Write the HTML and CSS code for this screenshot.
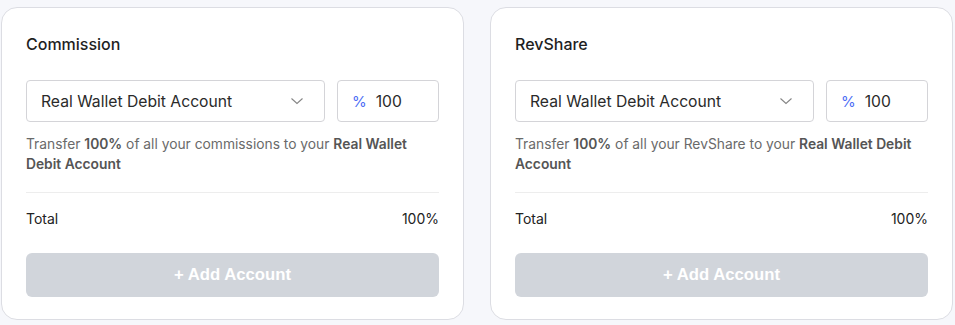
FILE: index.html
```html
<!DOCTYPE html>
<html>
<head>
<meta charset="utf-8">
<link rel="stylesheet" href="styles.css">
</head>
<body>
<div class="page">
  <section class="card">
    <h2 class="title">Commission</h2>
    <div class="fields">
      <div class="select">
        <span>Real Wallet Debit Account</span>
        <svg class="chev" width="14" height="8" viewBox="0 0 14 8"><path d="M1.5 1.5l5.5 5 5.5-5" fill="none" stroke="#858585" stroke-width="1.1"/></svg>
      </div>
      <div class="pct"><span class="sym">%</span><span class="val">100</span></div>
    </div>
    <p class="desc">Transfer <b>100%</b> of all your commissions to your <b>Real Wallet Debit Account</b></p>
    <div class="total"><span>Total</span><span>100%</span></div>
    <button class="add">+ Add Account</button>
  </section>
  <section class="card">
    <h2 class="title">RevShare</h2>
    <div class="fields">
      <div class="select">
        <span>Real Wallet Debit Account</span>
        <svg class="chev" width="14" height="8" viewBox="0 0 14 8"><path d="M1.5 1.5l5.5 5 5.5-5" fill="none" stroke="#858585" stroke-width="1.1"/></svg>
      </div>
      <div class="pct"><span class="sym">%</span><span class="val">100</span></div>
    </div>
    <p class="desc">Transfer <b>100%</b> of all your RevShare to your <b>Real Wallet Debit Account</b></p>
    <div class="total"><span>Total</span><span>100%</span></div>
    <button class="add">+ Add Account</button>
  </section>
</div>
</body>
</html>
```
FILE: styles.css
```css
* { box-sizing: border-box; }
body {
  margin: 0;
  background: #f6f7fb;
  font-family: Inter, "Noto Sans", sans-serif;
  color: #222;
}
.page {
  display: grid;
  grid-template-columns: 463px 463px;
  gap: 26px;
  padding: 7px 0 0 1px;
}
.card {
  background: #fff;
  border: 1px solid #dcdde3;
  border-radius: 16px;
  padding: 26px 24px 23px;
  height: 313px;
}
.title {
  margin: 0;
  font-size: 16px;
  font-weight: 500;
  line-height: 20px;
  color: #1f1f1f;
}
.fields {
  display: flex;
  gap: 12px;
  margin-top: 26px;
}
.select {
  width: 299px;
  height: 42px;
  border: 1px solid #d4d4d8;
  border-radius: 4px;
  display: flex;
  align-items: center;
  justify-content: space-between;
  padding: 0 20px 0 14px;
  font-size: 15.7px;
  color: #2a2a2a;
}
.pct {
  flex: 1;
  height: 42px;
  border: 1px solid #d4d4d8;
  border-radius: 4px;
  display: flex;
  align-items: center;
  padding-left: 14px;
  font-size: 15.7px;
}
.sym { color: #4d6ef5; font-size: 15px; margin-right: 9px; }
.val { color: #2a2a2a; }
.desc {
  margin: 12px 0 0;
  font-size: 13.8px;
  line-height: 20px;
  color: #6a6a6a;
  padding-bottom: 18px;
  border-bottom: 1px solid #ededed;
}
.desc b { font-weight: 600; color: #555; }
.total {
  display: flex;
  justify-content: space-between;
  margin-top: 16px;
  font-size: 14px;
  line-height: 20px;
  color: #222;
}
.add {
  display: block;
  width: 100%;
  margin-top: 24px;
  height: 44px;
  border: 0;
  border-radius: 6px;
  background: #d1d5db;
  color: #fff;
  font-family: "Liberation Sans", Arial, sans-serif;
  font-weight: 700;
  font-size: 16.7px;
}
```
